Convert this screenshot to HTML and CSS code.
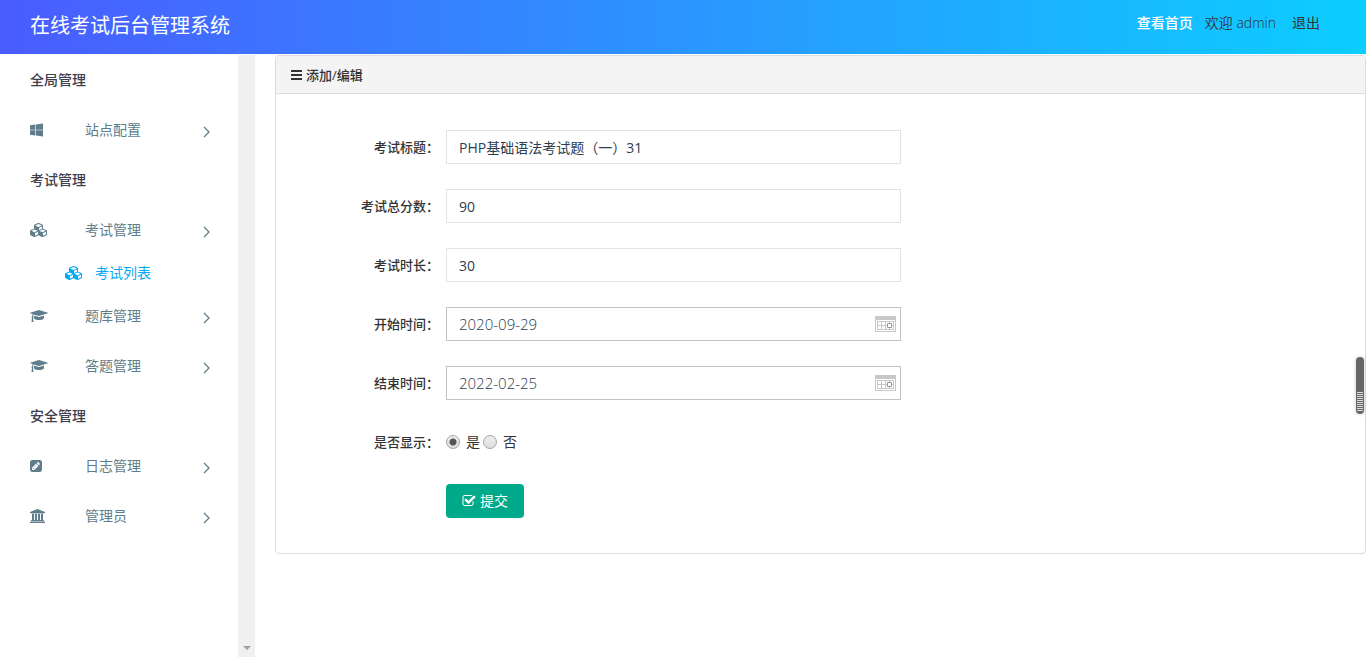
FILE: index.html
```html
<!DOCTYPE html>
<html lang="zh-CN">
<head>
    <meta charset="UTF-8">
    <meta name="viewport" content="width=device-width, initial-scale=1.0">
    <title>在线考试后台管理系统</title>
    <link rel="stylesheet" href="styles.css">
</head>
<body>
    <!-- icon set -->
    <svg class="sprite" aria-hidden="true">
        <symbol id="icon-windows" viewBox="0 0 1664 1792"><path d="M682 942v651l-682-94v-557h682zm0-743v659h-682v-565zm982 743v786l-907-125v-661h907zm0-878v794h-907v-669z"/></symbol>
        <symbol id="icon-cubes" viewBox="0 0 2304 1792"><path d="M640 1632l384-192v-314l-384 164v342zm-64-454l404-173-404-173-404 173zm1088 454l384-192v-314l-384 164v342zm-64-454l404-173-404-173-404 173zm-448-293l384-165v-266l-384 164v267zm-64-379l441-189-441-189-441 189zm1088 518v416q0 36-19 67t-52 47l-448 224q-25 14-57 14t-57-14l-448-224q-4-2-7-4-2 2-7 4l-448 224q-25 14-57 14t-57-14l-448-224q-33-16-52-47t-19-67v-416q0-38 21.500-70t56.500-48l434-186v-400q0-38 21.500-70t56.500-48l448-192q23-10 50-10t50 10l448 192q35 16 56.500 48t21.500 70v400l434 186q36 16 57 48t21 70z"/></symbol>
        <symbol id="icon-cap" viewBox="0 0 2304 1792"><path d="M1774 836l18 316q4 69-82 128t-235 93.500-323 34.500-323-34.500-235-93.500-82-128l18-316 574 181q22 7 48 7t48-7zm530-324q0 23-22 31l-1120 352q-4 1-10 1t-10-1l-652-206q-43 34-71 111.500t-34 178.500q63 36 63 109 0 69-58 107l58 433q2 14-8 25-9 11-24 11h-192q-15 0-24-11-10-11-8-25l58-433q-58-38-58-107 0-73 65-111 11-207 98-330l-333-104q-22-8-22-31t22-31l1120-352q4-1 10-1t10 1l1120 352q22 8 22 31z"/></symbol>
        <symbol id="icon-pencil" viewBox="0 0 1536 1792"><path d="M404 1108l152 152-52 52h-56v-96h-96v-56zm414-390q14 13-3 30l-291 291q-17 17-30 3-14-13 3-30l291-291q17-17 30-3zm-274 690l544-544-288-288-544 544v288h288zm608-608l92-92q28-28 28-68t-28-68l-152-152q-28-28-68-28t-68 28l-92 92zm384-384v960q0 119-84.500 203.500t-203.500 84.500h-960q-119 0-203.500-84.500t-84.500-203.500v-960q0-119 84.500-203.500t203.500-84.500h960q119 0 203.500 84.500t84.500 203.500z"/></symbol>
        <symbol id="icon-bank" viewBox="0 0 1920 1792"><path d="M960 0l960 384v128h-128q0 26-20.500 45t-48.500 19h-1526q-28 0-48.500-19t-20.500-45h-128v-128zm-704 640h256v768h128v-768h256v768h128v-768h256v768h128v-768h256v768h59q28 0 48.500 19t20.500 45v64h-1664v-64q0-26 20.500-45t48.500-19h59v-768zm1595 960q28 0 48.500 19t20.500 45v128h-1920v-128q0-26 20.500-45t48.500-19h1782z"/></symbol>
        <symbol id="icon-check" viewBox="0 0 1792 1792"><path d="M1472 930v318q0 119-84.500 203.500t-203.500 84.500h-832q-119 0-203.500-84.500t-84.500-203.500v-832q0-119 84.500-203.500t203.500-84.500h832q63 0 117 25 15 7 18 23 3 17-9 29l-49 49q-10 10-23 10-3 0-9-2-23-6-45-6h-832q-66 0-113 47t-47 113v832q0 66 47 113t113 47h832q66 0 113-47t47-113v-254q0-13 9-22l64-64q10-10 23-10 6 0 12 3 20 8 20 29zm231-489l-814 814q-24 24-57 24t-57-24l-430-430q-24-24-24-57t24-57l110-110q24-24 57-24t57 24l263 263 647-647q24-24 57-24t57 24l110 110q24 24 24 57t-24 57z"/></symbol>
        <symbol id="icon-arrow" viewBox="0 0 7 12"><path d="M1 1l5 5-5 5" fill="none" stroke="currentColor" stroke-width="1.300"/></symbol>
        <symbol id="icon-bars" viewBox="0 0 11 10"><path d="M0 0h11v2H0zM0 4h11v2H0zM0 8h11v2H0z"/></symbol>
        <symbol id="icon-date" viewBox="0 0 21 16">
            <path fill="#c8c8c8" d="M0 0h21v4H0zM0 4h1v12H0zM20 4h1v12h-1zM0 15h21v1H0zM2 5h17v1H2zM2 9h17v1H2zM2 13h17v1H2zM2 5h1v9H2zM6 5h1v9H6zM10 5h1v9h-1zM14 5h1v9h-1zM18 5h1v9h-1z"/>
            <path fill="#fff" stroke="#999" d="M12.500 7.500h4v4h-4z"/>
        </symbol>
    </svg>

    <header class="header">
        <h1 class="logo">在线考试后台管理系统</h1>
        <nav class="user-nav">
            <a class="home-link" href="#">查看首页</a>
            <span class="welcome">欢迎 admin</span>
            <a class="logout" href="#">退出</a>
        </nav>
    </header>

    <div class="wrapper">
        <aside class="sidebar">
            <nav class="menu">
                <h2 class="menu-title">全局管理</h2>
                <a class="menu-item" href="#">
                    <svg class="menu-icon icon-w13"><use href="#icon-windows"/></svg>
                    <span class="menu-text">站点配置</span>
                    <svg class="menu-arrow"><use href="#icon-arrow"/></svg>
                </a>
                <h2 class="menu-title">考试管理</h2>
                <a class="menu-item" href="#">
                    <svg class="menu-icon icon-w18"><use href="#icon-cubes"/></svg>
                    <span class="menu-text">考试管理</span>
                    <svg class="menu-arrow"><use href="#icon-arrow"/></svg>
                </a>
                <a class="sub-item" href="#">
                    <svg class="menu-icon icon-w18"><use href="#icon-cubes"/></svg>
                    <span>考试列表</span>
                </a>
                <a class="menu-item" href="#">
                    <svg class="menu-icon icon-w18"><use href="#icon-cap"/></svg>
                    <span class="menu-text">题库管理</span>
                    <svg class="menu-arrow"><use href="#icon-arrow"/></svg>
                </a>
                <a class="menu-item" href="#">
                    <svg class="menu-icon icon-w18"><use href="#icon-cap"/></svg>
                    <span class="menu-text">答题管理</span>
                    <svg class="menu-arrow"><use href="#icon-arrow"/></svg>
                </a>
                <h2 class="menu-title">安全管理</h2>
                <a class="menu-item" href="#">
                    <svg class="menu-icon icon-w12"><use href="#icon-pencil"/></svg>
                    <span class="menu-text">日志管理</span>
                    <svg class="menu-arrow"><use href="#icon-arrow"/></svg>
                </a>
                <a class="menu-item" href="#">
                    <svg class="menu-icon icon-w15"><use href="#icon-bank"/></svg>
                    <span class="menu-text">管理员</span>
                    <svg class="menu-arrow"><use href="#icon-arrow"/></svg>
                </a>
            </nav>
            <div class="scroll-track"><span class="scroll-down"></span></div>
        </aside>

        <main class="content">
            <section class="panel">
                <h2 class="panel-heading">
                    <svg class="bars"><use href="#icon-bars"/></svg>
                    添加/编辑
                </h2>
                <form class="panel-body">
                    <div class="form-group">
                        <label class="form-label" for="title">考试标题：</label>
                        <input class="form-control" type="text" id="title" value="PHP基础语法考试题（一）31">
                    </div>
                    <div class="form-group">
                        <label class="form-label" for="score">考试总分数：</label>
                        <input class="form-control" type="text" id="score" value="90">
                    </div>
                    <div class="form-group">
                        <label class="form-label" for="duration">考试时长：</label>
                        <input class="form-control" type="text" id="duration" value="30">
                    </div>
                    <div class="form-group">
                        <label class="form-label" for="start">开始时间：</label>
                        <div class="form-control date-box">
                            <input class="date-input" type="text" id="start" value="2020-09-29">
                            <svg class="date-icon"><use href="#icon-date"/></svg>
                        </div>
                    </div>
                    <div class="form-group">
                        <label class="form-label" for="end">结束时间：</label>
                        <div class="form-control date-box">
                            <input class="date-input" type="text" id="end" value="2022-02-25">
                            <svg class="date-icon"><use href="#icon-date"/></svg>
                        </div>
                    </div>
                    <div class="form-group" role="radiogroup" aria-labelledby="show-label">
                        <span class="form-label" id="show-label">是否显示：</span>
                        <div class="radios">
                            <label class="radio"><input type="radio" name="show" checked> 是</label>
                            <label class="radio"><input type="radio" name="show"> 否</label>
                        </div>
                    </div>
                    <div class="form-group">
                        <span class="form-label"></span>
                        <button class="btn" type="submit">
                            <svg class="btn-icon"><use href="#icon-check"/></svg>
                            提交
                        </button>
                    </div>
                </form>
            </section>
        </main>
    </div>

    <div class="page-scroll"></div>
</body>
</html>
```
FILE: styles.css
```css
* {
    margin: 0;
    padding: 0;
    box-sizing: border-box;
}

body {
    display: flex;
    flex-direction: column;
    min-height: 100vh;
    font-family: "Open Sans", "Noto Sans CJK SC", sans-serif;
    font-size: 14px;
    line-height: 20px;
    color: #333;
    background: #fff;
}

a {
    color: inherit;
    text-decoration: none;
}

svg {
    flex: none;
    fill: currentColor;
}

.sprite {
    position: absolute;
    width: 0;
    height: 0;
}

/* Header */
.header {
    display: flex;
    justify-content: space-between;
    height: 54px;
    padding: 0 46px 0 30px;
    background: linear-gradient(90deg, #4a5cff 0%, #0cceff 100%);
}

.logo {
    font-size: 20px;
    font-weight: 400;
    line-height: 52px;
    color: #fff;
}

.user-nav {
    display: flex;
    line-height: 46px;
}

.home-link {
    margin-right: 12px;
    color: #fff;
    font-weight: 500;
}

.welcome {
    margin-right: 16px;
    font-weight: 350;
}

/* Sidebar */
.wrapper {
    display: flex;
    flex: 1;
    padding-top: 1px;
}

.sidebar {
    display: flex;
    flex: none;
    width: 255px;
}

.menu {
    flex: 1;
}

.menu-title {
    height: 50px;
    padding-left: 30px;
    font-size: 14px;
    font-weight: 500;
    line-height: 50px;
    color: #3e3e4f;
}

.menu-item {
    display: flex;
    align-items: center;
    height: 50px;
    padding: 0 28px 0 30px;
    color: #607d8b;
}

.menu-icon {
    height: 14px;
}

.icon-w12 {
    width: 12px;
    margin-right: 43px;
}

.icon-w13 {
    width: 13px;
    margin-right: 42px;
}

.icon-w15 {
    width: 15px;
    margin-right: 40px;
}

.icon-w18 {
    width: 18px;
    margin-right: 37px;
}

.menu-text {
    flex: 1;
}

.menu-arrow {
    width: 7px;
    height: 12px;
    margin-top: 4px;
}

.sub-item {
    display: flex;
    align-items: center;
    height: 36px;
    padding-left: 65px;
    color: #03a9f4;
}

.sub-item .menu-icon {
    margin-right: 12px;
}

.scroll-track {
    display: flex;
    align-items: flex-end;
    justify-content: center;
    width: 17px;
    padding-bottom: 7px;
    background: #f0f0f0;
}

.scroll-down {
    border: 4px solid transparent;
    border-top-color: #a0a0a0;
    border-bottom: 0;
}

/* Content */
.content {
    flex: 1;
    padding-left: 20px;
}

.panel {
    border: 1px solid #ddd;
    border-radius: 4px;
}

.panel-heading {
    display: flex;
    align-items: center;
    gap: 4px;
    height: 38px;
    padding: 0 15px;
    border-bottom: 1px solid #ddd;
    border-radius: 3px 3px 0 0;
    background: #f4f4f4;
    font-size: 13px;
    font-weight: 500;
}

.bars {
    width: 11px;
    height: 10px;
}

.panel-body {
    padding: 36px 15px 35px 0;
}

.form-group {
    display: flex;
    align-items: center;
    gap: 7px;
    height: 34px;
    margin-bottom: 25px;
}

.form-group:last-child {
    margin-bottom: 0;
}

.form-label {
    flex: none;
    width: 163px;
    font-size: 13px;
    font-weight: 500;
    text-align: right;
}

.form-control {
    flex: 1;
    max-width: 455px;
    height: 34px;
    padding: 0 12px;
    border: 1px solid #dce4ec;
    background: #fff;
    font: inherit;
    color: #2c3e50;
}

.date-box {
    display: flex;
    align-items: center;
    padding-right: 4px;
    border-color: #c2c2c2;
    font-size: 15px;
    font-weight: 350;
}

.date-input {
    flex: 1;
    min-width: 0;
    border: 0;
    background: none;
    font: inherit;
    color: inherit;
}

.date-icon {
    width: 21px;
    height: 16px;
}

.radios {
    display: flex;
    gap: 3px;
}

.radio {
    display: flex;
    align-items: center;
    gap: 6px;
}

.radio input {
    appearance: none;
    width: 14px;
    height: 14px;
    border: 1px solid #a6a6a6;
    border-radius: 50%;
    background: linear-gradient(#eee, #ddd);
}

.radio input:checked {
    background: radial-gradient(circle, #555 3px, transparent 4px), linear-gradient(#eee, #ddd);
}

.btn {
    display: flex;
    align-items: center;
    gap: 4px;
    height: 34px;
    padding: 0 16px;
    border: 0;
    border-radius: 4px;
    background: #00a98a;
    color: #fff;
    font: inherit;
}

.btn-icon {
    width: 14px;
    height: 14px;
}

/* Floating page scrollbar */
.page-scroll {
    position: fixed;
    top: 357px;
    right: 2px;
    width: 8px;
    height: 57px;
    padding: 34px 1px 2px;
    border-radius: 4px;
    background: repeating-linear-gradient(#666 0 1px, #ddd 1px 2px) content-box, #666;
    box-shadow: 0 0 4px rgba(0, 0, 0, 0.2);
}
```
